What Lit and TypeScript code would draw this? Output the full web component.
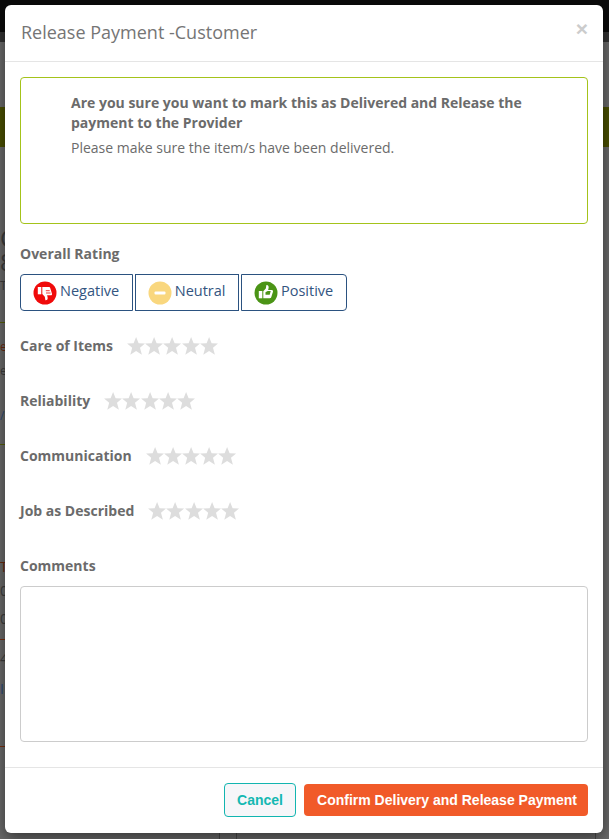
import { LitElement, html, css, svg } from "lit";
import { customElement } from "lit/decorators.js";

// bits of the dimmed page that peek out to the left of the dialog
const behind = [
  { h: 79, text: "", cls: "" },
  { h: 24, text: "C", cls: "big" },
  { h: 24, text: "8", cls: "big" },
  { h: 18, text: "T", cls: "small" },
  { h: 31, text: "", cls: "line olive" },
  { h: 30, text: "e", cls: "small red" },
  { h: 24, text: "e", cls: "small" },
  { h: 45, text: "/", cls: "small blue" },
  { h: 23, text: "", cls: "line olive" },
  { h: 113, text: "", cls: "" },
  { h: 16, text: "T", cls: "med red" },
  { h: 24, text: "0", cls: "med" },
  { h: 28, text: "0", cls: "med" },
  { h: 14, text: "", cls: "line red-line" },
  { h: 26, text: "4", cls: "med" },
  { h: 30, text: "I", cls: "med blue" },
  { h: 51, text: "", cls: "line red-line" },
];

const ratings = ["Care of Items", "Reliability", "Communication", "Job as Described"];

const hand = svg`
  <path fill="#fff" d="M4.800 10h3.500v7.300H4.800z"/>
  <path fill="#fff" d="M9.300 10.200l2.500-2.700.6-3.500c1.800-.2 2.600 1.300 2.200 3.100l-.5 1.900h3.600c1.200 0 1.600 1 1.200 1.900l-1.600 5.200c-.2.800-.8 1.200-1.500 1.200H9.300z"/>
`;

@customElement("app-root")
export class AppRoot extends LitElement {
  static styles = css`
    :host {
      display: block;
      position: relative;
      height: 839px;
      overflow: hidden;
      background: #6b6b6b;
      font-family: "Open Sans", sans-serif;
    }

    .topbar {
      height: 32px;
      background: #0b0b0b;
    }

    .subbar {
      height: 10px;
      background: #333;
      margin-bottom: 65px;
    }

    .band {
      height: 40px;
      background: #4b5000;
    }

    .row {
      display: flex;
      align-items: flex-end;
      width: 20px;
      overflow: hidden;
      color: #3d3d3d;
      line-height: 1;
    }

    .big {
      font-size: 24px;
      line-height: 24px;
    }
    .small {
      font-size: 12px;
    }
    .med {
      font-size: 14px;
    }
    .red {
      color: #6b2a10;
    }
    .blue {
      color: #2c4a78;
    }
    .line {
      border-bottom: 1px solid transparent;
      box-sizing: border-box;
    }
    .olive {
      border-bottom-color: #58600a;
    }
    .red-line {
      border-bottom-color: #7a3010;
    }

    .table-rules {
      position: absolute;
      left: 219px;
      right: 13px;
      bottom: 0;
      height: 12px;
      display: flex;
      justify-content: space-between;
    }
    .table-rules span {
      width: 16px;
      border-left: 1px solid #4a4a4a;
    }
    .table-rules span:first-child {
      border-right: 1px solid #4a4a4a;
    }
    .table-rules span:last-child {
      width: 1px;
      box-sizing: border-box;
    }

    .modal {
      position: absolute;
      left: 5px;
      top: 5px;
      width: 598px;
      height: 828px;
      display: flex;
      flex-direction: column;
      box-sizing: border-box;
      background: #fff;
      border-radius: 6px;
      box-shadow: 0 5px 15px rgba(0, 0, 0, 0.5);
      color: #6b6b6b;
      font-size: 14px;
      line-height: 20px;
    }

    header {
      height: 57px;
      box-sizing: border-box;
      border-bottom: 1px solid #e5e5e5;
      padding: 15px 15px 15px 16px;
      display: flex;
      justify-content: space-between;
    }

    h4 {
      margin: 0;
      font-size: 18px;
      font-weight: 400;
      line-height: 25px;
      color: #757575;
    }

    .close {
      font-family: "Liberation Sans", sans-serif;
      font-size: 21px;
      font-weight: 700;
      line-height: 18px;
      color: #ccc;
    }

    .body {
      flex: 1;
      padding: 15px;
      display: flex;
      flex-direction: column;
    }

    .alert {
      height: 147px;
      box-sizing: border-box;
      border: 1px solid #a4c31a;
      border-radius: 4px;
      padding: 15px 50px;
      margin-bottom: 20px;
    }

    .alert strong,
    .label {
      font-weight: 700;
    }

    .alert p {
      margin: 0;
    }

    .alert strong {
      display: block;
      margin-bottom: 5px;
    }

    .choices {
      display: flex;
      gap: 2px;
      margin: 10px 0 25px;
    }

    .choice {
      display: flex;
      align-items: center;
      gap: 3px;
      height: 37px;
      box-sizing: border-box;
      padding: 0 12.5px 0 12px;
      border: 1px solid #2b5280;
      background: #fff;
      color: #33557f;
      font: 500 14.5px "Open Sans", sans-serif;
    }

    .choice span {
      margin-bottom: 5px;
    }

    .choice:first-child {
      border-radius: 4px 0 0 4px;
    }

    .choice:last-child {
      border-radius: 0 4px 4px 0;
    }

    .choice svg {
      width: 24px;
      height: 24px;
    }

    .rating {
      display: flex;
      align-items: center;
      gap: 14px;
      height: 20px;
      margin-bottom: 35px;
    }

    .stars {
      display: flex;
    }

    .stars svg {
      width: 18.2px;
      height: 18px;
      fill: #ddd;
    }

    textarea {
      display: block;
      width: 100%;
      height: 156px;
      box-sizing: border-box;
      margin-top: 10px;
      border: 1px solid #ccc;
      border-radius: 4px;
      resize: none;
      background: #fff;
    }

    footer {
      display: flex;
      justify-content: flex-end;
      align-items: flex-start;
      gap: 8px;
      box-sizing: border-box;
      height: 66px;
      padding: 15px;
      border-top: 1px solid #e5e5e5;
    }

    footer button {
      font: 700 14px "Liberation Sans", sans-serif;
      border-radius: 4px;
    }

    .cancel {
      width: 72px;
      height: 34px;
      padding: 0;
      border: 1px solid #12b5b0;
      background: #f6f6f9;
      color: #14b8b2;
    }

    .confirm {
      width: 284px;
      height: 32px;
      margin-top: 1px;
      padding: 0 0 0 2px;
      border: 0;
      background: #f15a29;
      color: #fff;
    }
  `;

  private renderStars() {
    return html`<div class="stars">
      ${[0, 1, 2, 3, 4].map(
        () => html`<svg viewBox="0 0 18 18">
          <polygon points="9,0 11.500,6.200 18,6.500 12.900,10.800 14.800,17.700 9,13.900 3.200,17.700 5.100,10.800 0,6.500 6.500,6.200"></polygon>
        </svg>`
      )}
    </div>`;
  }

  render() {
    return html`
      <div class="topbar"></div>
      <div class="subbar"></div>
      <div class="band"></div>
      ${behind.map(
        (r) => html`<div class="row ${r.cls}" style="height:${r.h}px">${r.text}</div>`
      )}
      <div class="table-rules"><span></span><span></span></div>

      <div class="modal">
        <header>
          <h4>Release Payment -Customer</h4>
          <span class="close">×</span>
        </header>

        <div class="body">
          <div class="alert">
            <strong>Are you sure you want to mark this as Delivered and Release the payment to the Provider</strong>
            <p>Please make sure the item/s have been delivered.</p>
          </div>

          <div class="label">Overall Rating</div>
          <div class="choices">
            <button class="choice">
              <svg viewBox="0 0 24 24">
                <circle cx="12" cy="12" r="11.500" fill="#f00a0a"></circle>
                <g transform="matrix(1 0 0 -1 0 23.300)">
                  ${hand}
                  <path fill="none" stroke="#f00a0a" stroke-width=".8" d="M13 11.300h4.600M12.800 13.600h3.900"></path>
                </g>
              </svg>
              <span>Negative</span>
            </button>
            <button class="choice">
              <svg viewBox="0 0 24 24">
                <circle cx="12" cy="12" r="11.500" fill="#f9d77e"></circle>
                <rect x="6.500" y="10.500" width="11" height="3" rx="1" fill="#fff"></rect>
              </svg>
              <span>Neutral</span>
            </button>
            <button class="choice">
              <svg viewBox="0 0 24 24">
                <circle cx="12" cy="12" r="11.500" fill="#4b9416"></circle>
                ${hand}
                <path fill="#4b9416" d="M11.500 11.200l2.200-1.300h3l-1 3.800h-4.200z"></path>
              </svg>
              <span>Positive</span>
            </button>
          </div>

          ${ratings.map(
            (name) => html`<div class="rating">
              <span class="label">${name}</span>
              ${this.renderStars()}
            </div>`
          )}

          <div class="label">Comments</div>
          <textarea></textarea>
        </div>

        <footer>
          <button class="cancel">Cancel</button>
          <button class="confirm">Confirm Delivery and Release Payment</button>
        </footer>
      </div>
    `;
  }
}
